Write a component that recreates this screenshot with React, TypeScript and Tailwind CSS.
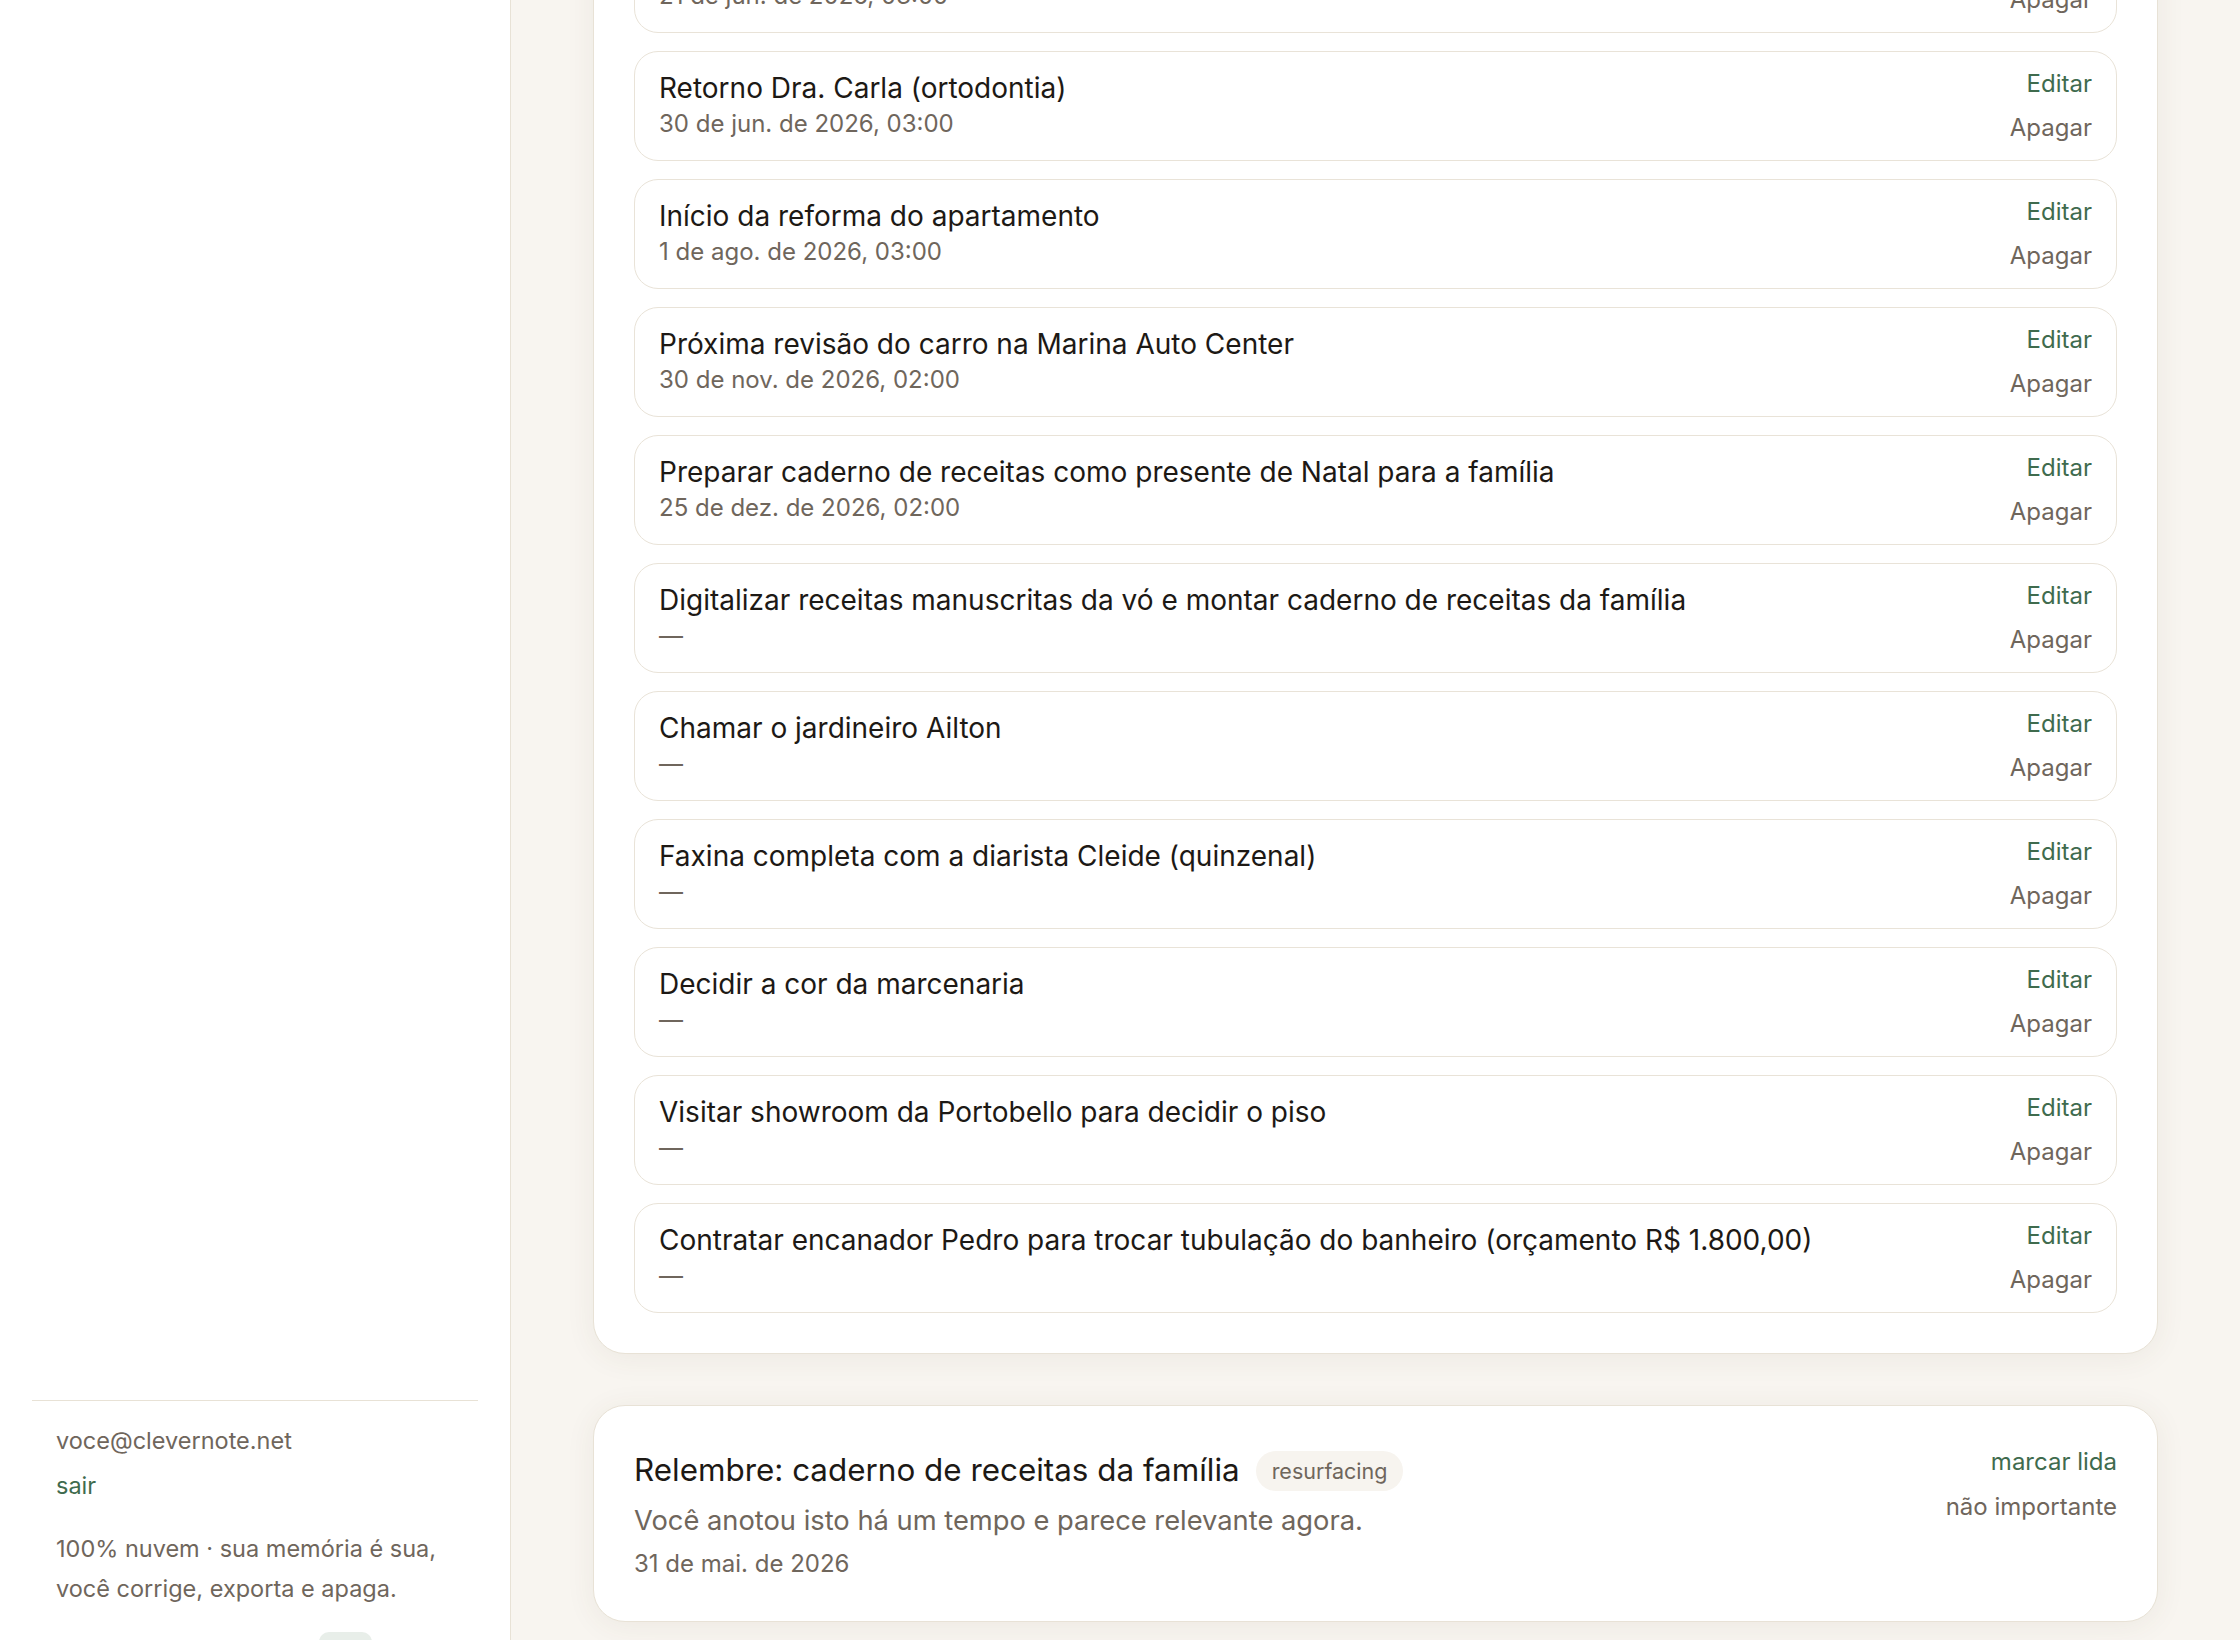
import { useState } from 'react';

type Reminder = {
  id: number;
  title: string;
  when: string | null;
};

const reminders: Reminder[] = [
  { id: 1, title: 'Pagar IPVA do carro', when: '21 de jun. de 2026, 03:00' },
  { id: 2, title: 'Retorno Dra. Carla (ortodontia)', when: '30 de jun. de 2026, 03:00' },
  { id: 3, title: 'Início da reforma do apartamento', when: '1 de ago. de 2026, 03:00' },
  { id: 4, title: 'Próxima revisão do carro na Marina Auto Center', when: '30 de nov. de 2026, 02:00' },
  { id: 5, title: 'Preparar caderno de receitas como presente de Natal para a família', when: '25 de dez. de 2026, 02:00' },
  { id: 6, title: 'Digitalizar receitas manuscritas da vó e montar caderno de receitas da família', when: null },
  { id: 7, title: 'Chamar o jardineiro Ailton', when: null },
  { id: 8, title: 'Faxina completa com a diarista Cleide (quinzenal)', when: null },
  { id: 9, title: 'Decidir a cor da marcenaria', when: null },
  { id: 10, title: 'Visitar showroom da Portobello para decidir o piso', when: null },
  { id: 11, title: 'Contratar encanador Pedro para trocar tubulação do banheiro (orçamento R$ 1.800,00)', when: null },
];

function ReminderRow({ item, onDelete }: { item: Reminder; onDelete: (id: number) => void }) {
  return (
    <li className="flex items-start justify-between gap-6 rounded-[24px] border border-[#e9e3d8] bg-white px-6 py-4">
      <div className="min-w-0 pt-px">
        <p className="text-[28px] leading-[38px] text-[#1d1915]">{item.title}</p>
        <p className="text-[24px] leading-[34px] text-[#6f665c]">{item.when ?? '—'}</p>
      </div>
      <div className="flex shrink-0 flex-col items-end gap-3 text-[24px] leading-[32px]">
        <button className="text-[#3f6b4e] hover:underline">Editar</button>
        <button onClick={() => onDelete(item.id)} className="text-[#6f665c] hover:underline">
          Apagar
        </button>
      </div>
    </li>
  );
}

export default function App() {
  const [items, setItems] = useState(reminders);
  const [resurfaced, setResurfaced] = useState(true);

  return (
    <div className="flex h-screen overflow-hidden bg-[#f8f5f0] font-['Inter','Noto_Sans',sans-serif]">
      <aside className="flex h-screen w-[511px] shrink-0 flex-col overflow-hidden border-r border-[#e8e2d6] bg-white px-8">
        <div className="flex-1" />
        <div className="-mb-[32px] border-t border-[#e8e2d6] px-6 pt-[24px]">
          <p className="text-[23.5px] leading-[32px] text-[#6f665c]">voce@clevernote.net</p>
          <button className="mt-[13px] text-[23.5px] leading-[32px] text-[#3f6b4e]">sair</button>
          <p className="mt-[27px] text-[23.5px] leading-[40px] text-[#6f665c]">
            100% nuvem · sua memória é sua,
            <br />
            você corrige, exporta e apaga.
          </p>
          <div className="mt-[23px] ml-[263px] h-[40px] w-[53px] rounded-[10px] bg-[#e8eee9]" />
        </div>
      </aside>

      <main className="min-w-0 flex-1 overflow-hidden">
        <div className="-mt-[118px] flex flex-col gap-[51px] px-[82px] pb-20">
          <section className="rounded-[32px] border border-[#e8e2d6] bg-white p-10 shadow-[0_4px_30px_rgba(90,70,40,0.07)]">
            <ul className="flex flex-col gap-[18px]">
              {items.map((item) => (
                <ReminderRow
                  key={item.id}
                  item={item}
                  onDelete={(id) => setItems(items.filter((r) => r.id !== id))}
                />
              ))}
            </ul>
          </section>

          {resurfaced && (
            <section className="flex items-start justify-between gap-6 rounded-[32px] border border-[#e8e2d6] bg-white p-10 shadow-[0_4px_30px_rgba(90,70,40,0.07)]">
              <div>
                <div className="flex h-[50px] items-center gap-4">
                  <h3 className="text-[31.4px] text-[#1d1915]">Relembre: caderno de receitas da família</h3>
                  <span className="flex h-[40px] items-center rounded-full bg-[#f7f4ef] px-4 text-[21.5px] text-[#6f665c]">
                    resurfacing
                  </span>
                </div>
                <p className="mt-[8px] text-[27.3px] leading-[34px] text-[#6f665c]">
                  Você anotou isto há um tempo e parece relevante agora.
                </p>
                <p className="mt-[9px] text-[24px] leading-[34px] text-[#6f665c]">31 de mai. de 2026</p>
              </div>
              <div className="flex shrink-0 flex-col items-end gap-[13px] text-[24px] leading-[32px]">
                <button onClick={() => setResurfaced(false)} className="text-[#3f6b4e] hover:underline">
                  marcar lida
                </button>
                <button onClick={() => setResurfaced(false)} className="text-[#6f665c] hover:underline">
                  não importante
                </button>
              </div>
            </section>
          )}
        </div>
      </main>
    </div>
  );
}
